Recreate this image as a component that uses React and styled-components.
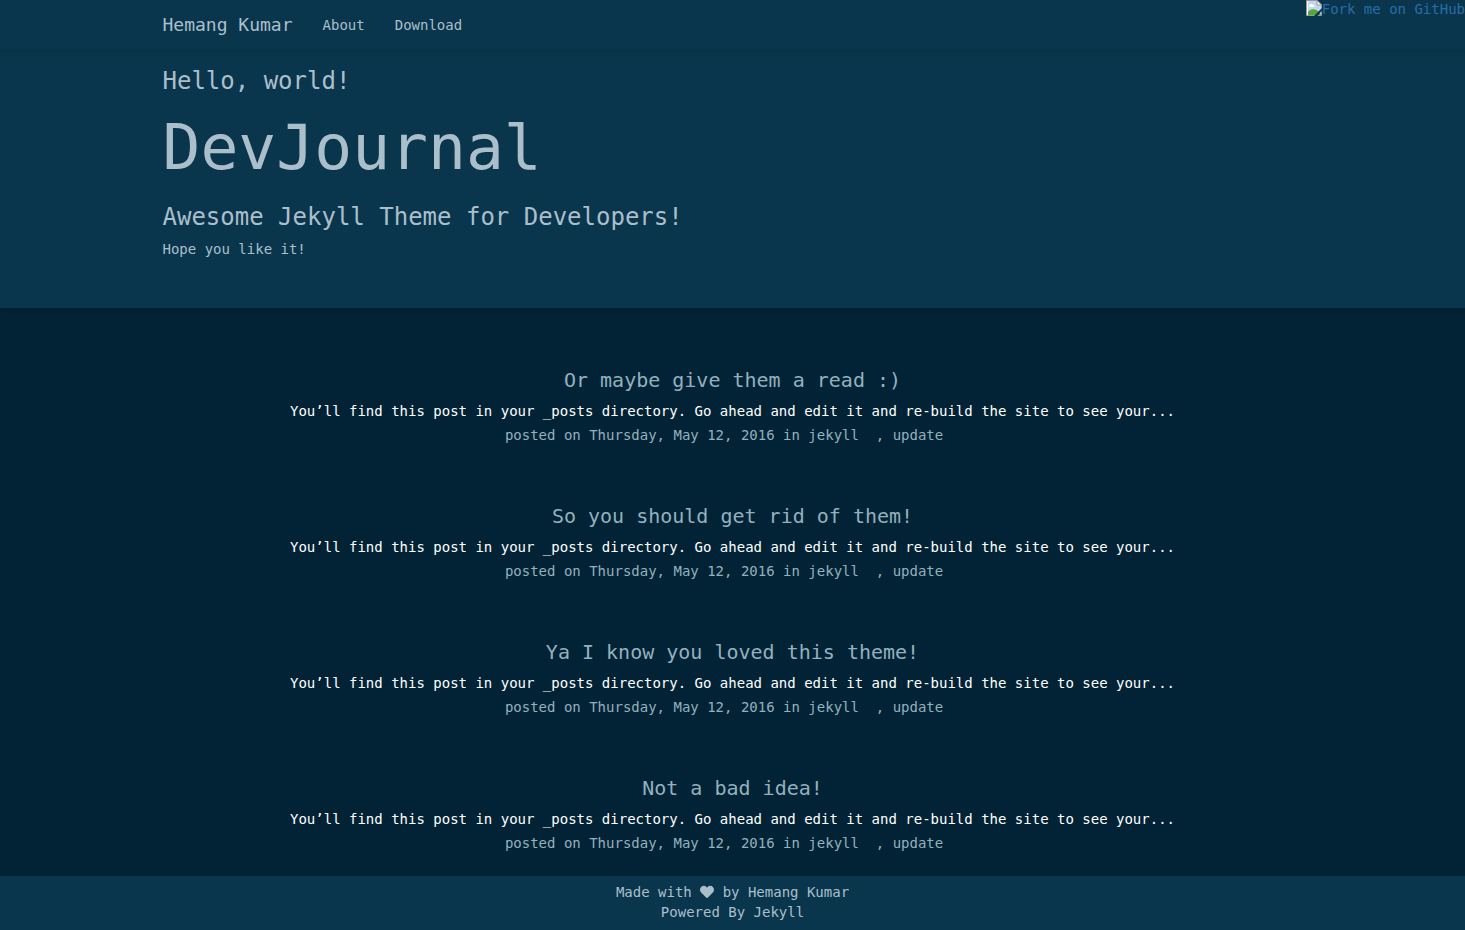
import React from "react";
import styled, { createGlobalStyle } from "styled-components";
import { FaHeart } from "react-icons/fa";

const GlobalStyle = createGlobalStyle`
  *, *::before, *::after { box-sizing: border-box; }
  body {
    margin: 0;
    background: #022336;
    color: #abbfcb;
    font-family: "DejaVu Sans Mono", "Liberation Mono", monospace;
    font-size: 14px;
    line-height: 20px;
  }
`;

const Page = styled.div`
  display: flex;
  flex-direction: column;
  min-height: 100vh;
`;

const Container = styled.div`
  width: 100%;
  max-width: 1170px;
  margin: 0 auto;
  padding: 0 15px;
`;

const Navbar = styled.nav`
  background: #09364d;
  border-bottom: 1px solid #09334a;
  box-shadow: 0 2px 4px rgba(0, 0, 0, 0.12);
  position: relative;
`;

const NavRow = styled(Container)`
  display: flex;
  align-items: center;
  gap: 30px;
  height: 49px;
`;

const NavLink = styled.a`
  color: #abbfcb;
  font-size: ${(p) => (p.$brand ? "18px" : "14px")};
  text-decoration: none;
`;

const ForkLink = styled.a`
  position: absolute;
  top: 0;
  right: 0;
  display: flex;
  color: #2b6ca6;
  line-height: 18px;
  text-decoration: none;
`;

const Hero = styled.header`
  background: #09364d;
  box-shadow: 0 2px 4px rgba(0, 0, 0, 0.12);
  padding: 17px 0 49px;
`;

const HeroLine = styled.h3`
  margin: 0;
  font-size: 24px;
  font-weight: 400;
  line-height: 28px;
`;

const HeroTitle = styled.h1`
  margin: 18px 0 20px;
  font-size: 63px;
  font-weight: 400;
  line-height: 70px;
`;

const HeroText = styled.p`
  margin: 8px 0 0;
`;

const Posts = styled.main`
  flex: 1;
  display: flex;
  flex-direction: column;
  gap: 55px;
  padding: 56px 15px 20px;
  text-align: center;
`;

const Post = styled.article`
  display: flex;
  flex-direction: column;
  gap: 4px;
`;

const PostTitle = styled.h4`
  margin: 0;
  padding: 4px 0 5px;
  font-size: 20px;
  font-weight: 400;
  line-height: 24px;
`;

const PostLink = styled.a`
  color: #93b1bd;
  text-decoration: none;
`;

const Excerpt = styled.p`
  margin: 0;
  color: #ffffff;
`;

const Meta = styled.p`
  margin: 0;
  color: #93b1bd;
`;

const Footer = styled.footer`
  background: #09364d;
  padding: 6px 0 8px;
  text-align: center;
`;

const FooterLine = styled.p`
  margin: 0;
`;

const FooterLink = styled.a`
  color: inherit;
  text-decoration: none;
`;

const Heart = styled(FaHeart)`
  width: 14px;
  height: 14px;
  vertical-align: -2px;
`;

const titles = [
  "Or maybe give them a read :)",
  "So you should get rid of them!",
  "Ya I know you loved this theme!",
  "Not a bad idea!",
];

function MissingImageIcon() {
  return (
    <svg width="16" height="16" viewBox="0 0 16 16" aria-hidden="true">
      <path d="M.5.5H11L15.500 5V15.500H.5Z" fill="#c3d6f4" stroke="#999" />
      <path d="M3 6c0-2 3-3 4-1 2 0 2 2 1 2H4C3 7 3 6 3 6Z" fill="#fff" />
      <path d="M1 15c0-6 8-8 12-3l2 3Z" fill="#52a937" />
      <path d="M1.500 1v14" stroke="#fff" />
      <path d="M11 .5V5h4.500Z" fill="#fff" stroke="#999" />
      <path d="M16 8v2.500L11.500 16H8Z" fill="#09364d" />
    </svg>
  );
}

export default function App() {
  return (
    <Page>
      <GlobalStyle />
      <Navbar>
        <NavRow>
          <NavLink href="#" $brand>Hemang Kumar</NavLink>
          <NavLink href="#about">About</NavLink>
          <NavLink href="#download">Download</NavLink>
        </NavRow>
        <ForkLink href="#fork">
          <MissingImageIcon />
          Fork me on GitHub
        </ForkLink>
      </Navbar>
      <Hero>
        <Container>
          <HeroLine>Hello, world!</HeroLine>
          <HeroTitle>DevJournal</HeroTitle>
          <HeroLine>Awesome Jekyll Theme for Developers!</HeroLine>
          <HeroText>Hope you like it!</HeroText>
        </Container>
      </Hero>
      <Posts>
        {titles.map((title) => (
          <Post key={title}>
            <PostTitle><PostLink href="#post">{title}</PostLink></PostTitle>
            <Excerpt>
              You’ll find this post in your _posts directory. Go ahead and edit it and re-build the site to see your...
            </Excerpt>
            <Meta>
              posted on Thursday, May 12, 2016 in <PostLink href="#jekyll">jekyll</PostLink>
              {"\u00a0 , "}
              <PostLink href="#update">update</PostLink>
              {"\u00a0\u00a0"}
            </Meta>
          </Post>
        ))}
      </Posts>
      <Footer>
        <FooterLine>
          Made with <Heart role="img" aria-label="love" /> by{" "}
          <FooterLink href="#author">Hemang Kumar</FooterLink>
        </FooterLine>
        <FooterLine>Powered By <FooterLink href="#jekyll">Jekyll</FooterLink></FooterLine>
      </Footer>
    </Page>
  );
}
